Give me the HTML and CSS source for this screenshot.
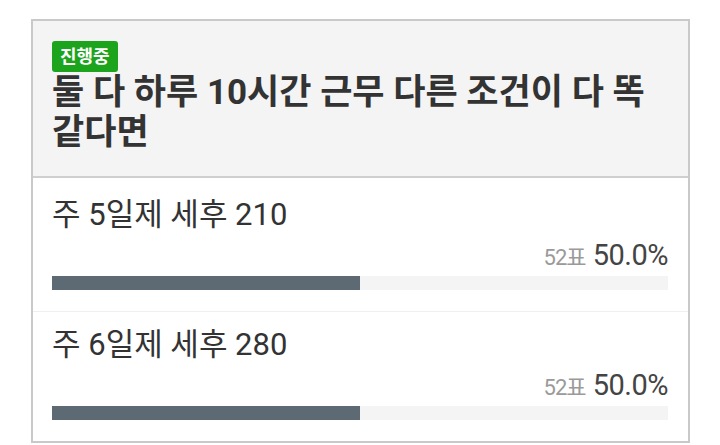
FILE: index.html
```html
<!DOCTYPE html>
<html lang="ko">
<head>
<meta charset="utf-8">
<link rel="stylesheet" href="styles.css">
</head>
<body>
<div class="poll">
  <div class="poll-head">
    <span class="badge">진행중</span>
    <h1 class="title">둘 다 하루 10시간 근무 다른 조건이 다 똑 같다면</h1>
  </div>
  <div class="options">
    <div class="option">
      <div class="label">주 5일제 세후 210</div>
      <div class="stats"><span class="votes">52표</span> <span class="pct">50.0%</span></div>
      <div class="track"><div class="fill" style="width:50%"></div></div>
    </div>
    <div class="option">
      <div class="label">주 6일제 세후 280</div>
      <div class="stats"><span class="votes">52표</span> <span class="pct">50.0%</span></div>
      <div class="track"><div class="fill" style="width:50%"></div></div>
    </div>
  </div>
</div>
</body>
</html>
```
FILE: styles.css
```css
html, body {
  margin: 0;
  padding: 0;
  background: #fff;
}
body {
  font-family: Roboto, "Noto Sans CJK KR", sans-serif;
  color: #333;
  padding: 19px 0 0 31px;
}
.poll {
  width: 655px;
  border: 2px solid #c9c9c9;
}
.poll-head {
  background: #f4f4f4;
  border-bottom: 2px solid #cfcfcf;
  padding: 20px 20px 23px 19px;
}
.badge {
  display: inline-block;
  background: #1ca41c;
  color: #fff;
  font-size: 18px;
  font-weight: 700;
  line-height: 31px;
  height: 31px;
  padding: 0 8px 0 8px;
  border-radius: 3px;
  vertical-align: top;
}
.title {
  margin: 1px 0 0;
  font-size: 35px;
  line-height: 40px;
  font-weight: 700;
  color: #333;
}
.options {
  padding-top: 4px;
}
.option {
  padding: 15px 20px 21px 19px;
  border-bottom: 1px solid #efefef;
}
.option:last-child {
  border-bottom: none;
}
.label {
  font-size: 31px;
  line-height: 36px;
}
.stats {
  margin-top: 7px;
  text-align: right;
  font-size: 29px;
  line-height: 30px;
}
.votes {
  font-size: 22px;
  line-height: 20px;
  color: #9a9a9a;
  letter-spacing: -1px;
}
.pct {
  font-size: 29px;
  color: #444;
  letter-spacing: -0.5px;
}
.track {
  margin-top: 6px;
  height: 14px;
  background: #f4f4f4;
}
.fill {
  height: 100%;
  background: #5e6a73;
}
```
